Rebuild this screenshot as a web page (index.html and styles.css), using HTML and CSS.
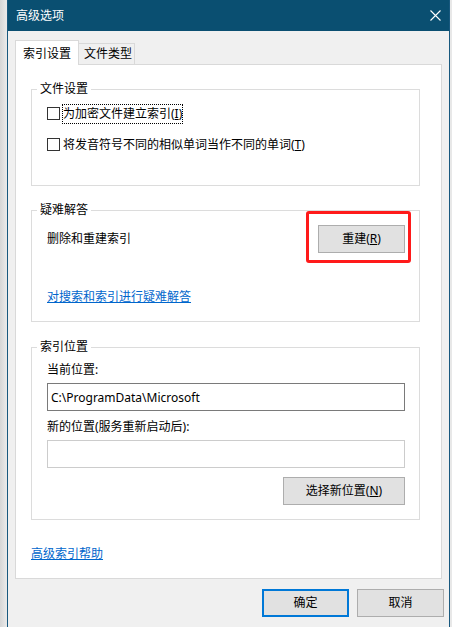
FILE: index.html
```html
<!DOCTYPE html>
<html lang="zh-CN">
<head>
  <meta charset="UTF-8" />
  <meta name="viewport" content="width=device-width, initial-scale=1.0"/>
  <title>高级选项</title>
  <link rel="stylesheet" href="styles.css">
</head>
<body>
  <div class="window">
    <div class="titlebar">
      <span class="title">高级选项</span>
      <svg class="close" width="11" height="11" viewBox="0 0 11 11">
        <path d="M0.5 0.5 L10.5 10.5 M10.5 0.5 L0.5 10.5" stroke="#fff" stroke-width="1.1" fill="none"/>
      </svg>
    </div>

    <div class="content">
      <div class="tabs">
        <div class="tab active">索引设置</div>
        <div class="tab">文件类型</div>
      </div>

      <div class="panel">
        <fieldset class="group g-files">
          <legend>文件设置</legend>
          <div class="group-body">
            <div class="check">
              <span class="box"></span>
              <span class="focus">为加密文件建立索引(<u>I</u>)</span>
            </div>
            <div class="check">
              <span class="box"></span>
              <span class="label">将发音符号不同的相似单词当作不同的单词(<u>T</u>)</span>
            </div>
          </div>
        </fieldset>

        <fieldset class="group g-trouble">
          <legend>疑难解答</legend>
          <div class="group-body">
            <div class="row">
              <span>删除和重建索引</span>
              <span class="marked">
                <button class="btn">重建(<u>R</u>)</button>
              </span>
            </div>
            <a class="link trouble-link" href="#">对搜索和索引进行疑难解答</a>
          </div>
        </fieldset>

        <fieldset class="group g-location">
          <legend>索引位置</legend>
          <div class="group-body">
            <div class="field-label">当前位置:</div>
            <input class="field" type="text" value="C:\ProgramData\Microsoft" readonly>
            <div class="field-label second">新的位置(服务重新启动后):</div>
            <input class="field empty" type="text" value="" disabled>
            <div class="row-end">
              <button class="btn wide">选择新位置(<u>N</u>)</button>
            </div>
          </div>
        </fieldset>

        <a class="link help-link" href="#">高级索引帮助</a>
      </div>

      <div class="actions">
        <button class="btn default">确定</button>
        <button class="btn">取消</button>
      </div>
    </div>
  </div>
</body>
</html>
```

FILE: styles.css
```css
* {
  box-sizing: border-box;
}

body {
  margin: 0;
  height: 627px;
  overflow: hidden;
  background: linear-gradient(to right, #d6d6d6, #e8e8e8 6px);
  font-family: "Noto Sans", "Noto Sans CJK SC", sans-serif;
  font-size: 12px;
  line-height: 16px;
  color: #000;
}

.window {
  margin-left: 7px;
  width: 443px;
  height: 627px;
  background: #f0f0f0;
  border-left: 1px solid #18587e;
  border-right: 1px solid #18587e;
}

.titlebar {
  height: 31px;
  background: #0a4f71;
  color: #fff;
  display: flex;
  align-items: center;
  justify-content: space-between;
  padding: 0 8px 0 8px;
}

.close {
  display: block;
}

.content {
  padding: 9px 7px 0 7px;
}

/* tabs */
.tabs {
  display: flex;
  align-items: flex-end;
  height: 24px;
}

.tab {
  height: 21px;
  width: 57px;
  margin-left: -1px;
  padding-left: 5px;
  border: 1px solid #d9d9d9;
  border-bottom: none;
  background: #f0f0f0;
  line-height: 20px;
}

.tab.active {
  position: relative;
  z-index: 1;
  margin-left: 0;
  width: 64px;
  height: 25px;
  margin-bottom: -1px;
  padding-left: 7px;
  background: #fff;
  line-height: 25px;
}

.panel {
  width: 427px;
  height: 515px;
  background: #fff;
  border: 1px solid #d9d9d9;
  padding-left: 15px;
}

/* group boxes */
.group {
  margin: 0;
  padding: 0;
  width: 389px;
  min-width: 0;
  border: 1px solid #dcdcdc;
}

.group legend {
  margin-left: 5px;
  padding: 0 3px;
  line-height: 16px;
}

.group-body {
  padding-left: 15px;
  padding-right: 14px;
}

.g-files { margin-top: 16px; }
.g-files .group-body { padding-top: 1px; padding-bottom: 25px; }

.g-trouble { margin-top: 16px; }
.g-trouble .group-body { padding-top: 7px; padding-bottom: 16px; }

.g-location { margin-top: 17px; }
.g-location .group-body { padding-top: 7px; padding-bottom: 14px; }

.check {
  height: 31px;
  display: flex;
  align-items: center;
}

.box {
  width: 13px;
  height: 13px;
  border: 1px solid #333;
  background: #fff;
  margin-right: 2px;
}

.focus {
  display: inline-block;
  padding: 2px 1px;
  outline: 1px dotted #000;
  outline-offset: -1px;
}

.label {
  padding-left: 1px;
}

.row {
  height: 28px;
  display: flex;
  align-items: center;
  justify-content: space-between;
}

/* red annotation around the rebuild button */
.marked {
  position: relative;
  display: block;
}

.marked::after {
  content: "";
  position: absolute;
  top: -14px;
  left: -12px;
  right: -6px;
  bottom: -10px;
  border: 3px solid #ff1a1a;
  border-radius: 3px;
}

.link {
  display: block;
  width: max-content;
  color: #0066cc;
  text-decoration: underline;
}

.trouble-link {
  margin-top: 36px;
}

.help-link {
  margin-top: 26px;
}

.field-label.second {
  margin-top: 8px;
}

.field {
  display: block;
  width: 358px;
  height: 28px;
  margin-top: 5px;
  padding: 0 3px;
  border: 1px solid #7a7a7a;
  background: #fff;
  font: inherit;
  color: #000;
  outline: none;
}

.field.empty {
  border-color: #cccccc;
}

.row-end {
  display: flex;
  justify-content: flex-end;
  margin-top: 9px;
}

/* buttons */
.btn {
  width: 87px;
  height: 28px;
  padding: 0;
  border: 1px solid #adadad;
  background: #e1e1e1;
  font: inherit;
  color: #000;
}

.btn.wide {
  width: 122px;
}

.btn.default {
  border: 2px solid #0078d7;
}

.actions {
  display: flex;
  justify-content: flex-end;
  gap: 8px;
  margin-top: 10px;
  margin-right: -2px;
}
```
